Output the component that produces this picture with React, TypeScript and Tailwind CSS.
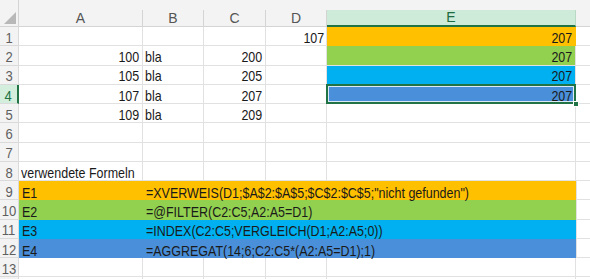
const FONT = { fontFamily: '"Liberation Sans", Arial, sans-serif' };

type DataRow = { a?: string; b?: string; c?: string; d?: string; e?: string; fill?: string };

const rows: DataRow[] = [
  { d: '107', e: '207', fill: 'bg-[#ffc000] border-[#ffc000]' },
  { a: '100', b: 'bla', c: '200', e: '207', fill: 'bg-[#92d050] border-[#92d050]' },
  { a: '105', b: 'bla', c: '205', e: '207', fill: 'bg-[#00b0f0] border-[#00b0f0]' },
  { a: '107', b: 'bla', c: '207', e: '207', fill: 'bg-[#4a8fd9] border-[#4a8fd9]' },
  { a: '109', b: 'bla', c: '209' },
  {},
  {},
  { a: 'verwendete Formeln' },
];

const formulas = [
  { label: 'E1', text: '=XVERWEIS(D1;$A$2:$A$5;$C$2:$C$5;"nicht gefunden")', fill: 'bg-[#ffc000]' },
  { label: 'E2', text: '=@FILTER(C2:C5;A2:A5=D1)', fill: 'bg-[#92d050]' },
  { label: 'E3', text: '=INDEX(C2:C5;VERGLEICH(D1;A2:A5;0))', fill: 'bg-[#00b0f0]' },
  { label: 'E4', text: '=AGGREGAT(14;6;C2:C5*(A2:A5=D1);1)', fill: 'bg-[#4a8fd9]' },
];

const cell = 'h-full shrink-0 border-r border-b border-[#e1e1e1] flex items-end leading-none whitespace-nowrap';

// narrow cell text, squeezed like the sheet's condensed font
function L({ children }: { children?: string }) {
  if (!children) return null;
  return <span className="inline-block origin-left scale-x-[0.86]">{children}</span>;
}
function R({ children }: { children?: string }) {
  if (!children) return null;
  return <span className="inline-block origin-right scale-x-[0.86]">{children}</span>;
}

function RowHead({ n, active }: { n?: number; active?: boolean }) {
  return active ? (
    <div className="h-full w-[19px] shrink-0 flex items-end justify-center leading-none bg-[#d3eedd] text-[#217346] border-r-2 border-b border-r-[#217346] border-b-[#dadada] text-[14.5px]">
      <span className="inline-block scale-x-[0.9]">{n}</span>
    </div>
  ) : (
    <div className="h-full w-[19px] shrink-0 flex items-end justify-center leading-none bg-[#f3f3f3] text-[#5f5f5f] border-r border-b border-[#dadada] text-[14.5px]">
      <span className="inline-block scale-x-[0.9]">{n}</span>
    </div>
  );
}

function ColHead({ label, w }: { label: string; w: string }) {
  return (
    <div className={`${w} h-[17px] shrink-0 flex items-center justify-center border-r border-b border-[#d4d4d4] text-[14px] text-[#555]`}>
      {label}
    </div>
  );
}

export default function App() {
  return (
    <div className="w-[590px] h-[279px] overflow-hidden bg-white text-[14.5px] text-[#1a1a1a]" style={FONT}>
      {/* column headers */}
      <div className="flex h-[27px] items-end bg-[#f3f3f3]">
        <div className="relative w-[19px] h-[27px] shrink-0 border-r border-b border-[#d4d4d4]">
          <svg className="absolute left-[4px] top-[12px]" width="12" height="12" viewBox="0 0 12 12">
            <polygon points="12,0 12,12 0,12" fill="#b8b8b8" />
          </svg>
        </div>
        <ColHead label="A" w="w-[124px]" />
        <ColHead label="B" w="w-[61px]" />
        <ColHead label="C" w="w-[62px]" />
        <ColHead label="D" w="w-[61px]" />
        <div className="w-[249px] h-[17px] shrink-0 flex items-center justify-center bg-[#cdebd8] border-r border-[#b9d9c4] border-b-2 border-b-[#217346] text-[14px] text-[#1e6b41]">
          E
        </div>
        <div className="flex-1 h-[17px] border-b border-[#d4d4d4]" />
      </div>

      {rows.map((r, i) => (
        <div key={i} className="flex h-[19.25px]">
          <RowHead n={i + 1} active={i === 3} />
          {r.a && /\d/.test(r.a) ? (
            <div className={`${cell} w-[124px] justify-end pr-[3px]`}><R>{r.a}</R></div>
          ) : (
            <div className={`${cell} w-[124px] pl-[2px]`}><L>{r.a}</L></div>
          )}
          <div className={`${cell} w-[61px] pl-[2px]`}><L>{r.b}</L></div>
          <div className={`${cell} w-[62px] justify-end pr-[3px]`}><R>{r.c}</R></div>
          <div className={`${cell} w-[61px] justify-end pr-[2px]`}><R>{r.d}</R></div>
          <div className={`${cell} relative w-[249px] justify-end pr-[3px] ${r.fill ?? ''}`}>
            <R>{r.e}</R>
            {i === 3 && (
              <>
                <div className="absolute -left-[1px] -top-[1px] right-[-1px] bottom-[-1px] z-10 border-2 border-[#217346]">
                  <div className="h-full w-full border border-white/80" />
                </div>
                <div className="absolute right-[-4px] bottom-[-4px] z-20 w-[6px] h-[6px] bg-[#217346] border border-white" />
              </>
            )}
          </div>
          <div className={`${cell} flex-1 border-r-0`} />
        </div>
      ))}

      {formulas.map((f, i) => (
        <div key={f.label} className="flex h-[19.25px]">
          <RowHead n={i + 9} />
          <div className={`w-[557px] h-full shrink-0 flex items-end leading-none whitespace-nowrap ${f.fill}`}>
            <div className="w-[124px] shrink-0 pl-[3px]"><L>{f.label}</L></div>
            <div className="pl-[3px]"><L>{f.text}</L></div>
          </div>
          <div className="h-full flex-1 border-l border-b border-[#e1e1e1]" />
        </div>
      ))}

      {[13, undefined].map((n, k) => (
        <div key={k} className="flex h-[19.25px]">
          <RowHead n={n} />
          <div className={`${cell} w-[124px]`} />
          <div className={`${cell} w-[61px]`} />
          <div className={`${cell} w-[62px]`} />
          <div className={`${cell} w-[61px]`} />
          <div className={`${cell} w-[249px]`} />
          <div className={`${cell} flex-1 border-r-0`} />
        </div>
      ))}
    </div>
  );
}
